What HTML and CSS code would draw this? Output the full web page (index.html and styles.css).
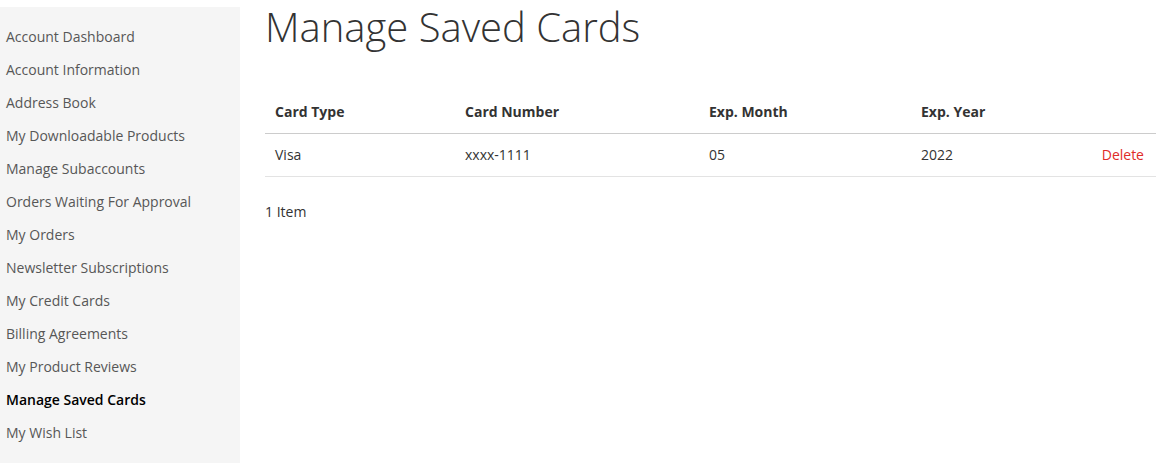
FILE: index.html
```html
<!DOCTYPE html>
<html lang="en">
<head>
<meta charset="utf-8">
<title>Manage Saved Cards</title>
<link rel="stylesheet" href="styles.css">
</head>
<body>
<div class="page">
  <nav class="sidebar">
    <ul class="nav-list">
      <li class="nav-item"><a href="#">Account Dashboard</a></li>
      <li class="nav-item"><a href="#">Account Information</a></li>
      <li class="nav-item"><a href="#">Address Book</a></li>
      <li class="nav-item"><a href="#">My Downloadable Products</a></li>
      <li class="nav-item"><a href="#">Manage Subaccounts</a></li>
      <li class="nav-item"><a href="#">Orders Waiting For Approval</a></li>
      <li class="nav-item"><a href="#">My Orders</a></li>
      <li class="nav-item"><a href="#">Newsletter Subscriptions</a></li>
      <li class="nav-item"><a href="#">My Credit Cards</a></li>
      <li class="nav-item"><a href="#">Billing Agreements</a></li>
      <li class="nav-item"><a href="#">My Product Reviews</a></li>
      <li class="nav-item current"><strong>Manage Saved Cards</strong></li>
      <li class="nav-item"><a href="#">My Wish List</a></li>
    </ul>
  </nav>
  <main class="main">
    <h1 class="page-title">Manage Saved Cards</h1>
    <table class="cards-table">
      <colgroup>
        <col class="c1"><col class="c2"><col class="c3"><col class="c4"><col class="c5">
      </colgroup>
      <thead>
        <tr>
          <th>Card Type</th>
          <th>Card Number</th>
          <th>Exp. Month</th>
          <th>Exp. Year</th>
          <th></th>
        </tr>
      </thead>
      <tbody>
        <tr>
          <td>Visa</td>
          <td>xxxx-1111</td>
          <td>05</td>
          <td>2022</td>
          <td class="actions"><a href="#" class="delete">Delete</a></td>
        </tr>
      </tbody>
    </table>
    <p class="count">1 Item</p>
  </main>
</div>
</body>
</html>
```

FILE: styles.css
```css
html, body {
  margin: 0;
  padding: 0;
  background: #fff;
}
body {
  font-family: "Open Sans", "Noto Sans", sans-serif;
  font-size: 14px;
  line-height: 20px;
  color: #333;
}
.page {
  display: flex;
  align-items: flex-start;
  padding-top: 7px;
}
.sidebar {
  width: 240px;
  flex: 0 0 240px;
  background: #f5f5f5;
  height: 456px;
  box-sizing: border-box;
  padding: 13px 0 0 6px;
}
.nav-list {
  list-style: none;
  margin: 0;
  padding: 0;
}
.nav-item {
  height: 33px;
  line-height: 33px;
  font-size: 14px;
}
.nav-item a {
  color: #575757;
  text-decoration: none;
}
.nav-item.current strong {
  color: #000;
  font-weight: 600;
}
.main {
  flex: 1;
  padding-left: 25px;
}
.page-title {
  margin: 0;
  font-size: 40px;
  line-height: 40px;
  font-weight: 300;
  color: #333;
}
.cards-table {
  margin-top: 44px;
  width: 100%;
  border-collapse: collapse;
  table-layout: fixed;
}
.c1 { width: 190px; }
.c2 { width: 244px; }
.c3 { width: 212px; }
.c4 { width: 150px; }
.cards-table th,
.cards-table td {
  text-align: left;
  padding: 11px 10px;
  line-height: 20px;
  font-size: 14px;
}
.cards-table th {
  font-weight: 700;
  color: #333;
  border-bottom: 1px solid #ccc;
}
.cards-table td {
  border-bottom: 1px solid #e3e3e3;
}
.cards-table td.actions {
  text-align: right;
  padding-right: 12px;
}
.delete {
  color: #e02b27;
  text-decoration: none;
}
.count {
  margin: 25px 0 0;
  font-size: 14px;
  line-height: 20px;
}
```
